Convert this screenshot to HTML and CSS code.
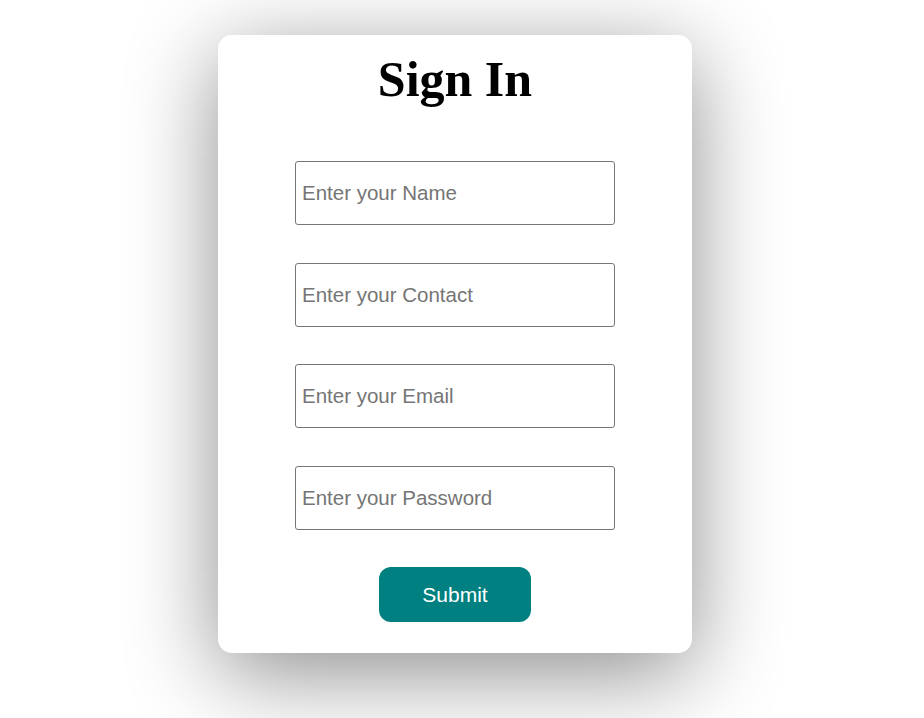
FILE: index.html
```html
<!DOCTYPE html>
<html>
<head>
<meta charset="utf-8">
<link rel="stylesheet" href="styles.css">
</head>
<body>
<div class="page">
  <div class="card">
    <h1 class="title">Sign In</h1>
    <form class="form">
      <input class="field" type="text" placeholder="Enter your Name">
      <input class="field" type="text" placeholder="Enter your Contact">
      <input class="field" type="email" placeholder="Enter your Email">
      <input class="field" type="password" placeholder="Enter your Password">
      <button class="submit" type="button">Submit</button>
    </form>
  </div>
</div>
</body>
</html>
```
FILE: styles.css
```css
html, body {
  margin: 0;
  padding: 0;
  background: #ffffff;
}
.page {
  display: flex;
  justify-content: center;
  padding: 35px 14px 65px 0;
}
.card {
  width: 474px;
  height: 618px;
  box-sizing: border-box;
  padding-top: 16px;
  background: #ffffff;
  border-radius: 14px;
  box-shadow: 0 20px 90px rgba(0, 0, 0, 0.45);
  display: flex;
  flex-direction: column;
  align-items: center;
}
.title {
  margin: 0;
  font-family: "Liberation Serif", "Times New Roman", serif;
  font-weight: bold;
  font-size: 50px;
  line-height: 57.5px;
  color: #000000;
}
.form {
  margin-top: 52.5px;
  display: flex;
  flex-direction: column;
  align-items: center;
  gap: 37.5px;
}
.field {
  width: 320px;
  height: 64px;
  box-sizing: border-box;
  border: 1px solid #767676;
  border-radius: 3px;
  padding: 0 6px;
  font-family: "Liberation Sans", Arial, sans-serif;
  font-size: 20.5px;
  color: #000;
  background: #fff;
  outline: none;
}
.field::placeholder {
  color: #757575;
}
.submit {
  width: 152px;
  height: 55px;
  border: none;
  border-radius: 12px;
  background: #008080;
  color: #ffffff;
  font-family: "Liberation Sans", Arial, sans-serif;
  font-size: 21px;
  cursor: pointer;
}
```
